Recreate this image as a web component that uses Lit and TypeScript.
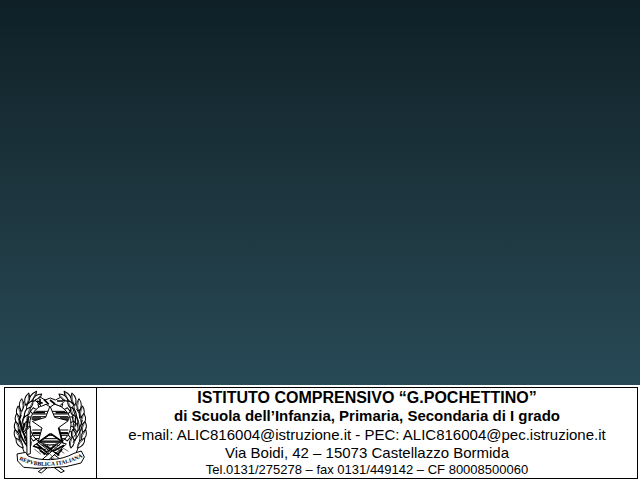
import { LitElement, html, svg, css } from "lit";
import { customElement } from "lit/decorators.js";

/** Leaves of the left branch: base x, base y, rotation, length. */
const LEAVES: number[][] = [
  [82, 70, 34, 44], [74, 76, 14, 38], [94, 64, 52, 36], [62, 94, 0, 38],
  [76, 90, 36, 34], [55, 114, -6, 36], [71, 112, 28, 34], [52, 136, -8, 36],
  [67, 134, 24, 32], [50, 158, -10, 34], [67, 156, 18, 32], [54, 182, -22, 34],
  [74, 182, 12, 34], [66, 204, -36, 36], [86, 204, -8, 34],
];

@customElement("republic-emblem")
export class RepublicEmblem extends LitElement {
  static styles = css`
    :host { display: block; }
    svg { display: block; width: 76px; height: 84px; }
    .ink { fill: none; stroke: #000; stroke-width: 3; stroke-linejoin: round; }
    .heavy { fill: none; stroke: #000; stroke-width: 5; }
    .fine { fill: none; stroke: #222; stroke-width: 2; }
    .paper { fill: #fff; stroke: #000; stroke-width: 3; stroke-linejoin: round; }
    .motto { font: bold 17px "Liberation Serif", serif; fill: #000; }
  `;

  private leaf([x, y, angle, length]: number[]) {
    const h = length / 2;
    return svg`<g transform="translate(${x} ${y}) rotate(${angle})">
      <path class="paper" d="M0 0Q-14 ${-h} 0 ${-length}Q14 ${-h} 0 0Z"/>
      <path class="fine" d="M2 0Q6 ${-h} 1 ${-length + 6}"/>
    </g>`;
  }

  private teeth() {
    return Array.from({ length: 14 }, (_, i) =>
      svg`<path class="paper" transform="rotate(${i * 25.7} 148 133)" d="M139 76L141 62H155L157 76Z"/>`);
  }

  render() {
    return html`<svg viewBox="36 30 228 252" role="img" aria-label="Repubblica Italiana">
      ${this.teeth()}
      <circle class="paper" cx="148" cy="133" r="62"/>
      <path class="ink" d="M104 94H192M96 102H200M94 110H202M92 118H204M94 150H202M95 158H201M97 166H199M102 176H194M110 183H186"/>
      <path class="heavy" d="M99 98H132M164 98H198M92 114H120M177 114H204M94 160H118M177 160H202M118 186H178"/>
      <path class="ink" d="M80 236C50 190 48 120 100 54"/>
      ${LEAVES.map((l) => this.leaf(l))}
      <path class="heavy" d="M57 122Q60 154 80 182M54 148Q62 180 84 205M72 130L66 150M60 105L54 121M82 112L78 142"/>
      <path class="paper" d="M77 150L88 139V221L78 224Z"/>
      <g transform="matrix(-1 0 0 1 296 0)">
        <path class="ink" d="M80 236C50 190 48 120 100 54"/>
        ${LEAVES.map((l) => this.leaf(l))}
        <path class="ink" d="M70 86Q58 99 60 116M82 79Q68 110 72 140M52 120Q57 148 77 170M54 143Q63 170 80 188"/>
      </g>
      <path class="paper" d="M147 78L161 112L202 122L173 143L185 187L148 161L111 188L123 144L94 124L134 112Z"/>
      <path class="heavy" d="M149 161L184 185L173 143M112 187L147 162"/>
      <path class="paper" d="M102 60L119 52L132 60L148 54L163 60L179 52L190 64L176 78L161 72L148 81L135 73L121 79Z"/>
      <path class="heavy" d="M107 63L125 70M129 58L143 73M147 60L162 72M168 63L187 63M117 56V74"/>
      <path class="paper" d="M99 196L113 188L188 246L209 252L196 260L176 253Z"/>
      <path class="paper" d="M196 192L182 188L113 248L91 262L112 266L128 253Z"/>
      <path class="heavy" d="M96 198L134 210M106 191L143 222M130 195L175 226M166 194L128 224M189 196L157 214M116 211L132 222M184 207L168 226"/>
      <path class="fine" d="M100 207L120 223M122 192L151 212M151 192L139 204M160 201L190 220M174 197L202 214M137 211L160 237"/>
      <path class="paper" d="M48 222L74 217L81 228Q108 240 148 239Q189 237 219 220L241 213L250 231L240 249Q195 264 148 263Q102 267 68 262L50 243Z"/>
      <path class="paper" d="M126 264L112 275L121 279L138 264ZM160 263L180 278L190 273L174 262Z"/>
      <path id="scroll" fill="none" d="M54 239Q102 262 148 257Q205 255 258 224"/>
      <text class="motto"><textPath href="#scroll">REPVBBLICA ITALIANA</textPath></text>
    </svg>`;
  }
}

@customElement("app-root")
export class AppRoot extends LitElement {
  static styles = css`
    :host {
      display: flex;
      flex-direction: column;
      justify-content: flex-end;
      min-height: 100vh;
      background: linear-gradient(to bottom, #0f2027, #203a43, #2c5364);
      font-family: "Liberation Sans", Arial, sans-serif;
      color: #000;
    }
    .banner { background: #fff; padding: 2px 2px 1px 4px; }
    .letterhead { display: flex; border: 1px solid #000; }
    .crest {
      flex: none;
      display: flex;
      align-items: center;
      padding: 0 7px 2px 8px;
      border-right: 1px solid #000;
    }
    .details { flex: 1; padding-top: 1px; text-align: center; }
    h1, p { margin: 0; font-size: 15px; line-height: 18px; }
    h1 { font-size: 16px; font-weight: bold; }
    .subtitle { font-weight: bold; }
    .contact { line-height: 19px; }
    .phone { font-size: 13px; line-height: 16px; }
  `;

  render() {
    return html`
      <header class="banner">
        <div class="letterhead">
          <div class="crest"><republic-emblem></republic-emblem></div>
          <div class="details">
            <h1>ISTITUTO COMPRENSIVO “G.POCHETTINO”</h1>
            <p class="subtitle">di Scuola dell’Infanzia, Primaria, Secondaria di I grado</p>
            <p class="contact">e-mail: ALIC816004@istruzione.it - PEC: ALIC816004@pec.istruzione.it</p>
            <p>Via Boidi, 42 – 15073 Castellazzo Bormida</p>
            <p class="phone">Tel.0131/275278 – fax 0131/449142 – CF 80008500060</p>
          </div>
        </div>
      </header>
    `;
  }
}
